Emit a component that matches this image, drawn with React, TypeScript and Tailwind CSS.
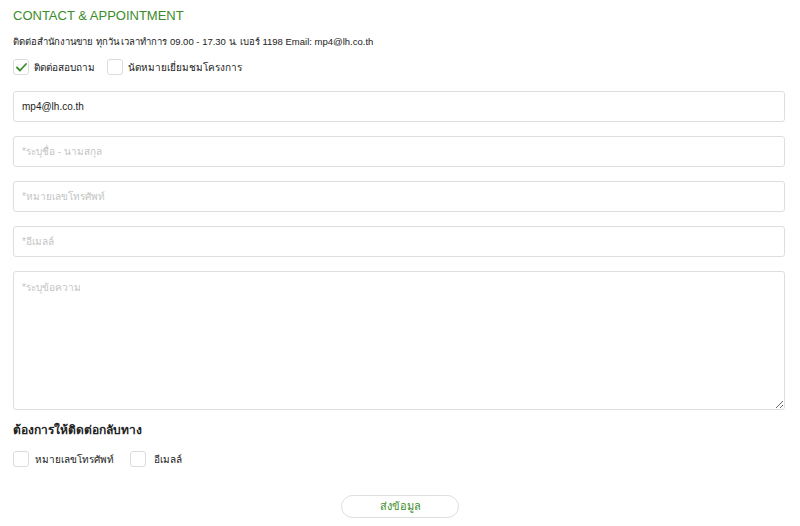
import { useState } from "react"

function Box({ checked, onClick }: { checked: boolean; onClick: () => void }) {
  return (
    <button
      type="button"
      onClick={onClick}
      className="w-[16px] h-[16px] rounded-[3px] border border-[#dcdcdc] bg-white flex items-center justify-center shrink-0"
    >
      {checked && (
        <svg width="11" height="9" viewBox="0 0 11 9" fill="none">
          <path d="M1 4.5 L4 7.5 L10 1" stroke="#3b8c2a" strokeWidth="1.8" strokeLinecap="round" strokeLinejoin="round" />
        </svg>
      )}
    </button>
  )
}

const inputCls =
  "w-full h-[31px] rounded-[3px] border border-[#dedede] bg-white px-[8px] text-[10px] text-[#222] placeholder:text-[#c4c4c4] outline-none"

export default function App() {
  const [ask, setAsk] = useState(true)
  const [visit, setVisit] = useState(false)
  const [byPhone, setByPhone] = useState(false)
  const [byMail, setByMail] = useState(false)

  return (
    <div
      className="w-[800px] h-[526px] bg-white px-[13px] pt-[7px] text-[#222]"
      style={{ fontFamily: '"Liberation Sans", "Noto Sans", sans-serif' }}
    >
      <h1 className="text-[13px] leading-[17px] text-[#3b8c2a] uppercase">Contact &amp; Appointment</h1>
      <p className="mt-[12px] text-[9.5px] leading-[12px] text-[#222]">
        ติดต่อสำนักงานขาย ทุกวัน เวลาทำการ 09.00 - 17.30 น. เบอร์ 1198 Email: mp4@lh.co.th
      </p>

      <div className="mt-[10px] flex items-center h-[18px]">
        <label className="flex items-center gap-[5px]">
          <Box checked={ask} onClick={() => setAsk(!ask)} />
          <span className="text-[10px]">ติดต่อสอบถาม</span>
        </label>
        <label className="flex items-center gap-[5px] ml-[12px]">
          <Box checked={visit} onClick={() => setVisit(!visit)} />
          <span className="text-[10px]">นัดหมายเยี่ยมชมโครงการ</span>
        </label>
      </div>

      <div className="mt-[15px] flex flex-col gap-[14px] w-[772px]">
        <input className={inputCls} defaultValue="mp4@lh.co.th" />
        <input className={inputCls} placeholder="*ระบุชื่อ - นามสกุล" />
        <input className={inputCls} placeholder="*หมายเลขโทรศัพท์" />
        <input className={inputCls} placeholder="*อีเมลล์" />
        <textarea
          className="w-full h-[139px] rounded-[3px] border border-[#dedede] bg-white px-[8px] py-[8px] text-[10px] placeholder:text-[#c4c4c4] outline-none"
          placeholder="*ระบุข้อความ"
        />
      </div>

      <h2 className="mt-[12px] text-[12px] leading-[16px] font-bold text-[#222]">ต้องการให้ติดต่อกลับทาง</h2>
      <div className="mt-[12px] flex items-center h-[18px]">
        <label className="flex items-center gap-[6px]">
          <Box checked={byPhone} onClick={() => setByPhone(!byPhone)} />
          <span className="text-[10px]">หมายเลขโทรศัพท์</span>
        </label>
        <label className="flex items-center gap-[8px] ml-[16px]">
          <Box checked={byMail} onClick={() => setByMail(!byMail)} />
          <span className="text-[10px]">อีเมลล์</span>
        </label>
      </div>

      <div className="mt-[27px] flex justify-center">
        <button
          type="button"
          className="w-[118px] h-[23px] rounded-full border border-[#dedede] bg-white text-[11px] text-[#3b8c2a]"
        >
          ส่งข้อมูล
        </button>
      </div>
    </div>
  )
}
